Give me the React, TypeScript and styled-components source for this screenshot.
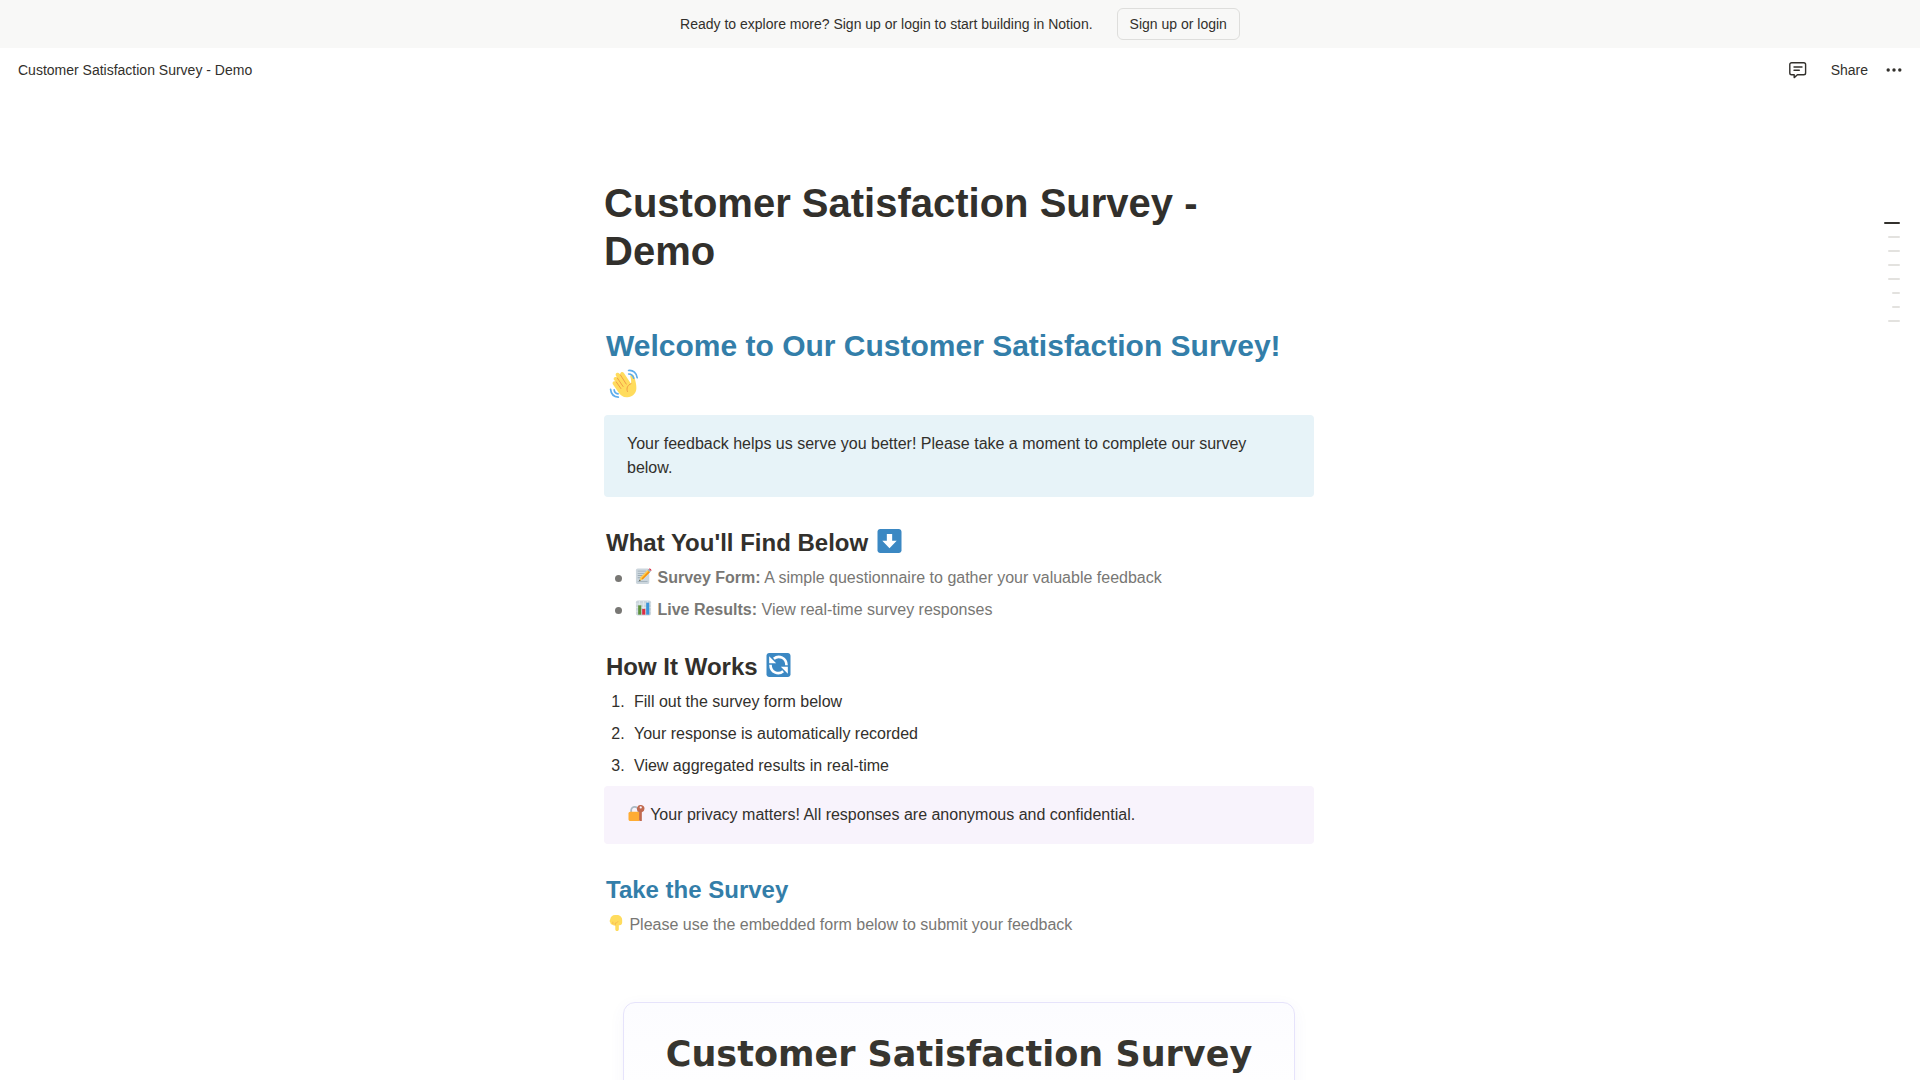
import React from "react";
import styled, { createGlobalStyle } from "styled-components";

const ink = "#32302c";
const muted = "#787774";
const blue = "#337ea9";

const GlobalStyle = createGlobalStyle`
  * { box-sizing: border-box; }
  body {
    margin: 0;
    background: #fff;
    color: ${ink};
    font-family: "Liberation Sans", Arial, sans-serif;
    font-size: 16px;
    line-height: 24px;
  }
  html, body, #root { height: 100%; }
  h1, h2, p, ul, ol { margin: 0; }
`;

const App = styled.div`
  display: flex;
  flex-direction: column;
  height: 100vh;
  overflow: hidden;
`;

const Banner = styled.div`
  display: flex;
  align-items: center;
  justify-content: center;
  gap: 24px;
  flex-shrink: 0;
  height: 48px;
  background: #f8f8f7;
  font-size: 14px;
`;

const OutlineButton = styled.button`
  height: 32px;
  padding: 0 12px;
  border: 1px solid #dededc;
  border-radius: 6px;
  background: transparent;
  color: ${ink};
  font: inherit;
  line-height: 20px;
  cursor: pointer;
`;

const TopBar = styled.header`
  display: flex;
  align-items: center;
  justify-content: space-between;
  flex-shrink: 0;
  height: 44px;
  padding: 0 12px;
  font-size: 14px;
`;

const Crumb = styled.a`
  padding: 0 6px;
  color: ${ink};
  text-decoration: none;
`;

const Actions = styled.div`
  display: flex;
  align-items: center;
  gap: 4px;
`;

const PlainButton = styled.button<{ $icon?: boolean }>`
  display: inline-flex;
  align-items: center;
  justify-content: center;
  height: 28px;
  ${(p) => (p.$icon ? "width: 28px; padding: 0;" : "padding: 0 8px;")}
  ${(p) => (p.$icon ? "" : "margin-left: 8px;")}
  border: 0;
  border-radius: 6px;
  background: transparent;
  color: ${ink};
  font: inherit;
  cursor: pointer;
`;

const Scroller = styled.div`
  position: relative;
  flex: 1;
  min-height: 0;
  overflow: hidden;
`;

const Page = styled.main`
  width: 100%;
  max-width: 712px;
  margin: 0 auto;
  padding: 87px 2px 0 0;
`;

const Title = styled.h1`
  font-size: 40px;
  line-height: 48px;
  font-weight: 700;
`;

const Heading = styled.h2<{ $large?: boolean; $blue?: boolean }>`
  margin-top: ${(p) => (p.$large ? "48px" : "27px")};
  padding: ${(p) => (p.$large ? "3px 2px" : "3px 2px 4px")};
  color: ${(p) => (p.$blue ? blue : ink)};
  font-size: ${(p) => (p.$large ? "30px" : "24px")};
  line-height: ${(p) => (p.$large ? "39px" : "31px")};
  font-weight: 600;

  ul + & {
    margin-top: 22px;
  }
`;

const Callout = styled.div<{ $color: string; $spaced?: boolean }>`
  margin-top: ${(p) => (p.$spaced ? "8px" : "4px")};
  padding: 17px 23px;
  border-radius: 4px;
  background: ${(p) => p.$color};
`;

const Bullets = styled.ul`
  padding: 0 2px;
  list-style: none;
  color: ${muted};
`;

const Steps = styled.ol`
  padding: 0 2px;
  list-style: none;
`;

const Item = styled.li`
  display: flex;
  gap: 4px;
  padding: 4px 0;
`;

const Marker = styled.span`
  display: flex;
  align-items: center;
  justify-content: center;
  width: 24px;
  height: 24px;
`;

const Dot = styled.span`
  width: 7px;
  height: 7px;
  border-radius: 50%;
  background: ${muted};
`;

const Note = styled.p`
  padding: 4px 2px;
  color: ${muted};
`;

const emojiAlign = (size: number) => (size > 24 ? -4 : size > 16 ? -2 : -1);

const Emoji = styled.svg<{ $size: number; $box: number }>`
  width: ${(p) => p.$box}px;
  height: ${(p) => p.$size}px;
  vertical-align: ${(p) => emojiAlign(p.$size)}px;
`;

const FormCard = styled.section`
  margin: 61px 19px 0;
  padding: 24px;
  height: 400px;
  border: 1px solid #e6e3fb;
  border-radius: 12px;
  background: linear-gradient(#fcfcff, #ffffff 120px);
  box-shadow: 0 4px 16px rgba(80, 70, 180, 0.05);
  text-align: center;
`;

const FormTitle = styled.h2`
  font-family: "DejaVu Sans", sans-serif;
  font-size: 35px;
  line-height: 54px;
  font-weight: 700;
  white-space: nowrap;
  color: #37352f;
`;

const Outline = styled.nav`
  position: absolute;
  top: 130px;
  right: 20px;
  display: flex;
  flex-direction: column;
  align-items: flex-end;
  gap: 12px;
`;

const Tick = styled.span<{ $width: number; $active?: boolean }>`
  width: ${(p) => p.$width}px;
  height: 2px;
  border-radius: 2px;
  background: ${(p) => (p.$active ? ink : "#e3e2df")};
`;

type EmojiProps = { label: string; size?: number; box?: number; children: React.ReactNode };

function Glyph({ label, size = 16, box = 19, children }: EmojiProps) {
  return (
    <Emoji $size={size} $box={box} viewBox="0 0 36 36" role="img" aria-label={label}>
      {children}
    </Emoji>
  );
}

const Wave = () => (
  <Glyph label="waving hand" size={30} box={36}>
    <path fill="#FFDC5D" d="M6 13.2c-.8-1.2-.5-2.7.7-3.4 1.1-.7 2.4-.3 3.2.8L8.4 8.3C7.600 7.1 7.900 5.500 9.100 4.800s2.700-.4 3.500.8l1 1.500c-.5-1.100-.2-2.300.8-3 1.200-.8 2.700-.4 3.500.7l8.500 12.900c.4-2.400.2-5.300-.7-7.800-.5-1.400.2-2.600 1.400-2.900 1.200-.3 2.300.3 2.800 1.500 1.300 3.700 3.400 10.600 2.900 15.500-.5 5.500-4.700 9.700-10.700 10-5.300.3-8.400-2.300-10.800-6L4.800 18.600c-.8-1.200-.6-2.700.6-3.500 1-.7 2.300-.5 3.200.4z" />
    <path fill="none" stroke="#EF9645" strokeWidth="1.100" strokeLinecap="round" d="M8.600 15.400l5.700 8.100M9.900 10.700l7 10.300M13.600 7l7.100 11.100M26.400 17.700c-3.800 1.200-6 5.200-4.300 9.300" />
    <path fill="none" stroke="#5DADEC" strokeWidth="2" strokeLinecap="round" d="M23.500 1.800c5.600-.7 9.600 3.300 10.300 8.700M23.600 6c3 0 5.300 2.100 6.100 5.100M1.900 24.500c.5 5.200 3.900 8.900 9.300 9.300M6.200 25c.3 2.700 2 4.500 4.700 4.800" />
  </Glyph>
);

const DownArrow = () => (
  <Glyph label="down arrow" size={24} box={29}>
    <path fill="#3B88C3" d="M36 32c0 2.200-1.800 4-4 4H4c-2.200 0-4-1.800-4-4V4c0-2.200 1.800-4 4-4h28c2.200 0 4 1.800 4 4z" />
    <path fill="#FFF" d="M14 7.500h8v10h6.800L18 29 7.200 17.500H14z" />
  </Glyph>
);

const Refresh = () => (
  <Glyph label="arrows in a circle" size={24} box={29}>
    <path fill="#3B88C3" d="M36 32c0 2.200-1.800 4-4 4H4c-2.200 0-4-1.800-4-4V4c0-2.200 1.800-4 4-4h28c2.200 0 4 1.800 4 4z" />
    <path fill="none" stroke="#FFF" strokeWidth="4" d="M11 8.500C18.500 2.500 30 7 30 18.500M25 27.500C17.500 33.500 6 29 6 17.500" />
    <path fill="#FFF" d="M4 5v10.500h10.500zM32 31V20.500H21.500z" />
  </Glyph>
);

const Memo = () => (
  <Glyph label="memo">
    <path fill="#CCD6DD" d="M31 32c0 2.200-1.800 4-4 4H5c-2.200 0-4-1.800-4-4V5c0-2.200 1.800-4 4-4h22c2.200 0 4 1.800 4 4z" />
    <path fill="#99AAB5" d="M5 6h19v2H5zm0 5h16v2H5zm0 5h12v2H5zm0 5h8v2H5zm0 8h22v2H5z" />
    <path fill="#FFCC4D" d="M11 21L27.500 4.500l5 5L16 26l-7 3z" />
    <path fill="#F4900C" d="M13.500 23.500l16.500-16.500 2.500 2.500L16 26z" />
    <path fill="#99AAB5" d="M27.500 4.500L30 2l5 5-2.500 2.500z" />
    <path fill="#DD2E44" d="M30 2c2-3 8 2 5 5z" />
    <path fill="#292F33" d="M9.600 26l2 2L8 30z" />
  </Glyph>
);

const Chart = () => (
  <Glyph label="bar chart">
    <rect x="1" y="1" width="34" height="34" rx="4" fill="#CCD6DD" />
    <path stroke="#E1E8ED" strokeWidth="2" d="M1 9h34M1 17h34M1 25h34M9 1v34M18 1v34M27 1v34" />
    <path fill="#5C913B" d="M6 12h7v21H6z" />
    <path fill="#DD2E44" d="M15 20h7v13h-7z" />
    <path fill="#3B94D9" d="M24 6h7v27h-7z" />
  </Glyph>
);

const LockKey = () => (
  <Glyph label="locked with key">
    <path fill="none" stroke="#AAB8C2" strokeWidth="4" d="M6 18v-6a8 8 0 0 1 16 0v6" />
    <path fill="#FFAC33" d="M26 32c0 2.200-1.800 4-4 4H4c-2.200 0-4-1.800-4-4V19c0-2.200 1.800-4 4-4h18c2.200 0 4 1.800 4 4z" />
    <path fill="#C1694F" d="M36 8.500a8.500 8.500 0 1 0-12 7.700V33c0 2 1.200 3 3 3h3V16.500A8.500 8.500 0 0 0 36 8.500zM27.500 3a2.500 2.500 0 1 1 0 5 2.500 2.500 0 0 1 0-5z" />
  </Glyph>
);

const PointDown = () => (
  <Glyph label="pointing down">
    <path fill="#FFDC5D" d="M21.500 36c-2.600 0-4-1.600-4-4V23c-2 1.500-5 1-6-1-3 0-5-2-5-5-2-2-2-5-.5-7C7 4 11 0 17 0h5c6 0 11 5 11 11v6c0 4-3 7-7.500 6v9c0 2.400-1.400 4-4 4z" />
    <path fill="none" stroke="#EF9645" strokeWidth="1" strokeLinecap="round" d="M17.500 23v-5c3 0 5-1 6-3M12 20v-4" />
  </Glyph>
);

const CommentIcon = () => (
  <svg width="20" height="20" viewBox="-1 0 20 20" fill="none" stroke="currentColor" strokeWidth="1.400" strokeLinecap="round" strokeLinejoin="round" aria-hidden="true">
    <path d="M3.600 2.800h12.200a1.800 1.800 0 0 1 1.800 1.800v8.400a1.800 1.800 0 0 1-1.800 1.800H9.400L6.200 17.600v-2.800H3.600A1.800 1.800 0 0 1 1.800 13V4.600a1.800 1.800 0 0 1 1.800-1.800z" />
    <path d="M6 7h8M6 10.300h5.300" />
  </svg>
);

const DotsIcon = () => (
  <svg width="20" height="20" viewBox="0 0 20 20" fill="currentColor" aria-hidden="true">
    <circle cx="4.200" cy="10" r="1.700" />
    <circle cx="10" cy="10" r="1.700" />
    <circle cx="15.800" cy="10" r="1.700" />
  </svg>
);

const steps = [
  "Fill out the survey form below",
  "Your response is automatically recorded",
  "View aggregated results in real-time",
];

const outline = [16, 12, 12, 12, 12, 8, 8, 12];

export default function SurveyPage() {
  return (
    <App>
      <GlobalStyle />
      <Banner>
        <span>Ready to explore more? Sign up or login to start building in Notion.</span>
        <OutlineButton type="button">Sign up or login</OutlineButton>
      </Banner>
      <TopBar>
        <Crumb href="#top">Customer Satisfaction Survey - Demo</Crumb>
        <Actions>
          <PlainButton $icon type="button" aria-label="Comments">
            <CommentIcon />
          </PlainButton>
          <PlainButton type="button">Share</PlainButton>
          <PlainButton $icon type="button" aria-label="More">
            <DotsIcon />
          </PlainButton>
        </Actions>
      </TopBar>
      <Scroller>
        <Page id="top">
          <Title>Customer Satisfaction Survey - Demo</Title>
          <Heading $large $blue>
            Welcome to Our Customer Satisfaction Survey! <Wave />
          </Heading>
          <Callout $color="#e7f3f8" $spaced>
            Your feedback helps us serve you better! Please take a moment to complete our survey below.
          </Callout>
          <Heading>
            What You'll Find Below <DownArrow />
          </Heading>
          <Bullets>
            <Item>
              <Marker><Dot /></Marker>
              <span><Memo /> <strong>Survey Form:</strong> A simple questionnaire to gather your valuable feedback</span>
            </Item>
            <Item>
              <Marker><Dot /></Marker>
              <span><Chart /> <strong>Live Results:</strong> View real-time survey responses</span>
            </Item>
          </Bullets>
          <Heading>
            How It Works <Refresh />
          </Heading>
          <Steps>
            {steps.map((step, i) => (
              <Item key={step}>
                <Marker>{i + 1}.</Marker>
                <span>{step}</span>
              </Item>
            ))}
          </Steps>
          <Callout $color="#f8f3fc">
            <LockKey /> Your privacy matters! All responses are anonymous and confidential.
          </Callout>
          <Heading $blue>Take the Survey</Heading>
          <Note>
            <PointDown /> Please use the embedded form below to submit your feedback
          </Note>
          <FormCard>
            <FormTitle>Customer Satisfaction Survey</FormTitle>
          </FormCard>
        </Page>
        <Outline aria-label="Page outline">
          {outline.map((width, i) => (
            <Tick key={i} $width={width} $active={i === 0} />
          ))}
        </Outline>
      </Scroller>
    </App>
  );
}
